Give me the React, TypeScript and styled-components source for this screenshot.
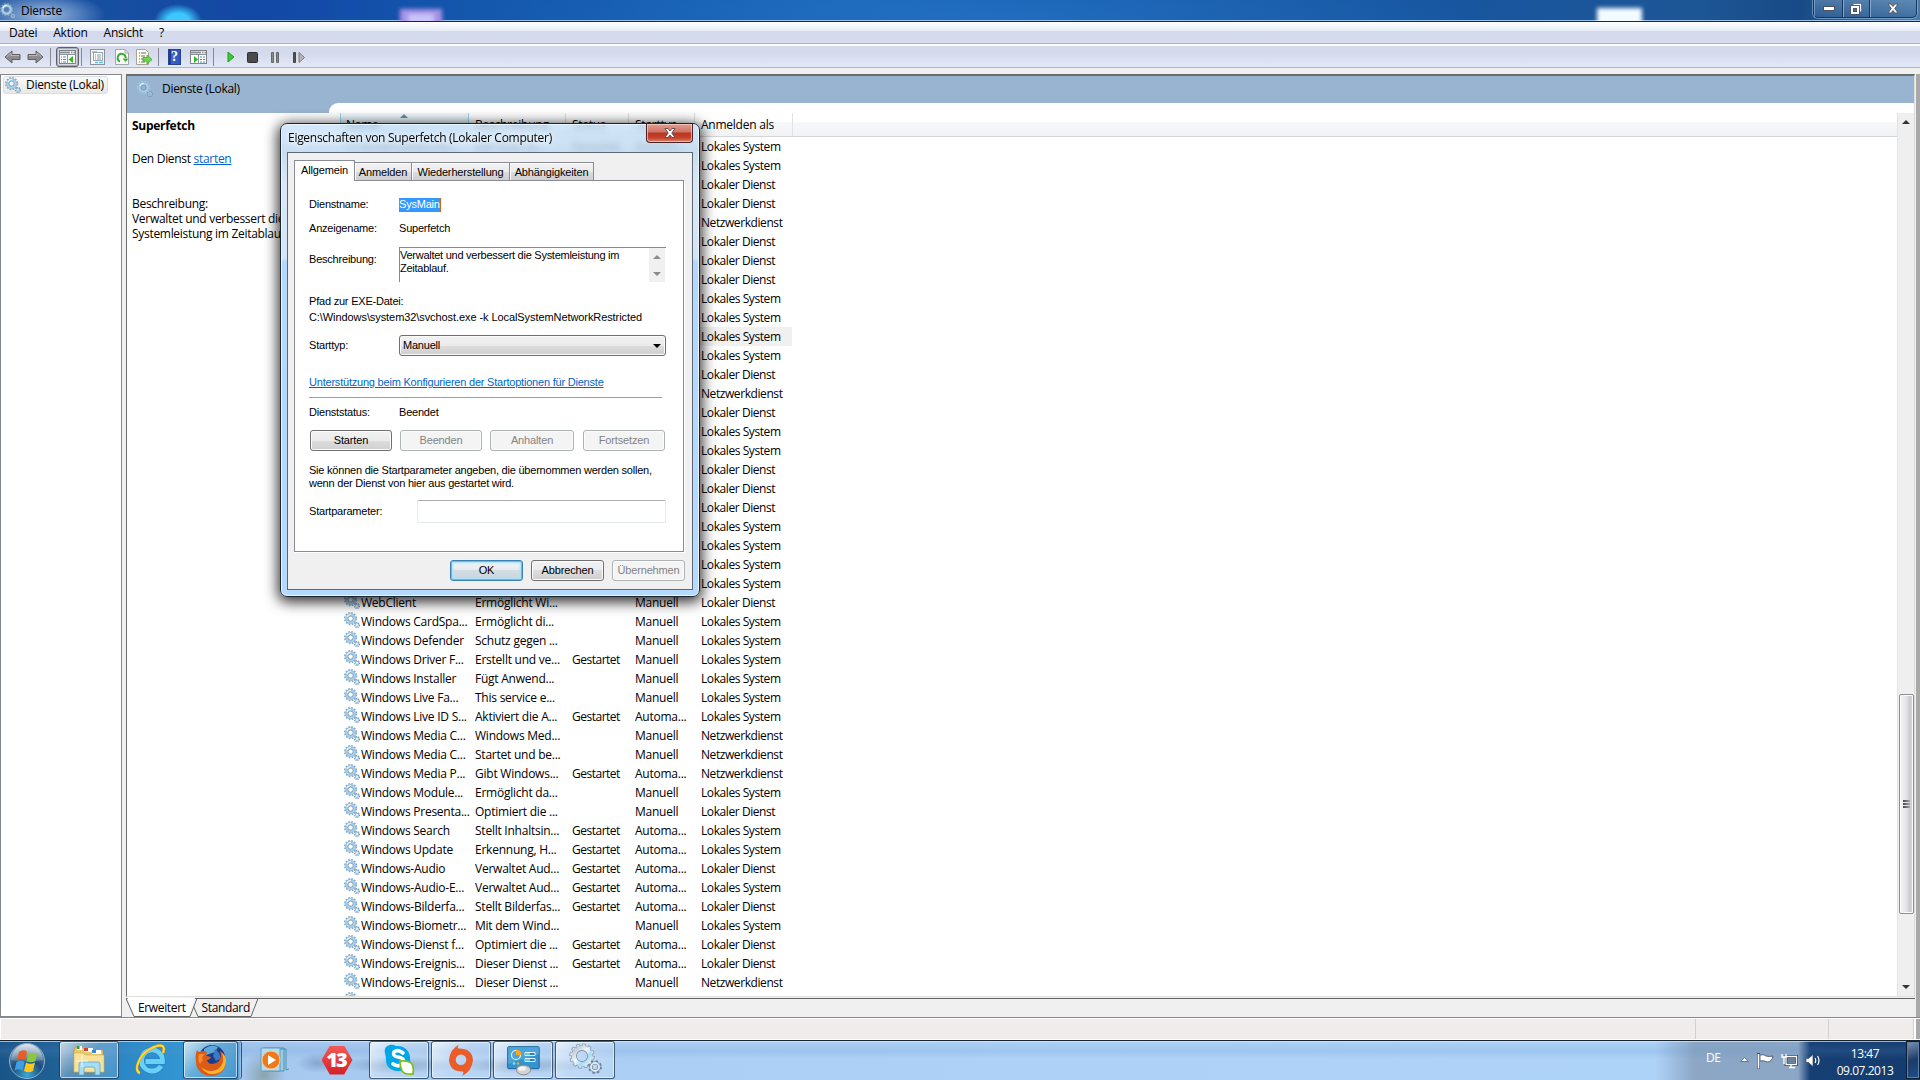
import React from 'react';
import styled, { createGlobalStyle, css } from 'styled-components';

const Global = createGlobalStyle`
  * { box-sizing: border-box; }
  html, body { margin: 0; padding: 0; overflow: hidden; }
  body { font: 12px/15px "Open Sans", "Noto Sans", sans-serif; letter-spacing: -0.24px; color: #000; }
`;

const Screen = styled.div`
  position: relative;
  width: 1920px;
  height: 1080px;
  display: flex;
  flex-direction: column;
  overflow: hidden;
  background: #f0f0f0;
`;

/* ---------- window chrome ---------- */

const TitleBar = styled.header`
  position: relative;
  overflow: hidden;
  height: 22px;
  flex: none;
  display: flex;
  justify-content: space-between;
  border-bottom: 1px solid #14284a;
  background:
    linear-gradient(#9fc0e6, #9fc0e6) 0 100% / 100% 1px no-repeat,
    radial-gradient(ellipse 62px 22px at 44px 15px, rgba(190, 215, 245, 0.8), rgba(150, 190, 235, 0) 100%),
    radial-gradient(ellipse 24px 17px at 178px 21px, #3ac8ff 45%, rgba(30, 150, 240, 0) 100%),
    radial-gradient(ellipse 500px 60px at 1000px 20px, rgba(40, 120, 205, 0.5), rgba(30, 100, 190, 0)),
    linear-gradient(90deg, #2c5da4 0, #174fa0 90px, #1248a6 260px, #1459ae 500px, #1b66b8 850px, #17559f 1450px, #1d5695 1700px, #174a86 1800px, #4a7aa8 1915px);
`;
const TitleLeft = styled.div`
  display: flex;
  align-items: center;
  gap: 5px;
  height: 21px;
  width: 1000px;
`;
const DesktopGlow = styled.i<{ $left: number; $top: number; $w: number; $c: string }>`
  position: absolute;
  left: ${p => p.$left}px;
  top: ${p => p.$top}px;
  width: ${p => p.$w}px;
  height: 20px;
  background: ${p => p.$c};
  filter: blur(2px);
`;
const Caption = styled.div`
  position: relative;
  display: flex;
  height: 18px;
  margin-right: 3px;
  border: 1px solid #16365e;
  border-top: 0;
  border-radius: 0 0 5px 5px;
  box-shadow: 0 0 0 1px rgba(160, 195, 225, 0.55);
  background: linear-gradient(rgba(110, 150, 190, 0.55), rgba(60, 105, 155, 0.5));
`;
const CaptionButton = styled.span<{ $w: number }>`
  width: ${p => p.$w}px;
  display: flex;
  align-items: center;
  justify-content: center;
  border-left: 1px solid rgba(170, 200, 230, 0.5);
  & + & { border-left: 1px solid #16365e; box-shadow: inset 1px 0 0 rgba(170, 200, 230, 0.6); }
`;
const MenuBar = styled.nav`
  height: 24px;
  flex: none;
  display: flex;
  gap: 16px;
  padding: 3px 9px 0;
  border-bottom: 2px solid #fbfbfc;
  box-shadow: inset 0 -1px 0 #b2b2b0;
  background: linear-gradient(#ffffff 0, #e6ecf6 9px, #d4d9ec 9px, #d5daed 22px);
`;
const ToolBar = styled.div`
  height: 22px;
  flex: none;
  display: flex;
  align-items: center;
  padding-top: 1px;
  border-bottom: 1px solid #adb5c8;
  background: linear-gradient(#d4d9ec 0, #d5daed 8px, #e3e9f8 100%);
`;
const Tool = styled.span<{ $w: number; $ml?: number; $active?: boolean }>`
  width: ${p => p.$w}px;
  margin-left: ${p => p.$ml ?? 0}px;
  height: 20px;
  flex: none;
  display: flex;
  align-items: center;
  justify-content: center;
  ${p => p.$active && css`
    border: 1px solid #606068;
    border-radius: 3px;
    background: #d6d9e2;
    box-shadow: inset 0 0 0 1px #a9adba;
  `}
`;
const ToolSep = styled.span<{ $ml: number }>`
  width: 1px;
  height: 18px;
  margin-left: ${p => p.$ml}px;
  background: #858995;
`;

/* ---------- workspace ---------- */

const Workspace = styled.main`
  flex: none;
  height: 950px;
  display: flex;
  padding-top: 6px;
  background: #f0f0f0;
  border-bottom: 1px solid #868a8c;
`;
const Tree = styled.aside`
  width: 122px;
  height: 943px;
  background: #fff;
  border: 1px solid #828790;
  padding: 1px 2px;
`;
const TreeItem = styled.div`
  display: flex;
  align-items: center;
  gap: 5px;
  width: 105px;
  height: 18px;
  padding: 0 0 1px 1px;
  border: 1px solid #dcdcdc;
  border-radius: 3px;
  background: linear-gradient(#fafafa, #e8e8e8);
  white-space: nowrap;
  letter-spacing: -0.3px;
`;
const Main = styled.section`
  width: 1789px;
  margin-left: 4px;
  display: flex;
  flex-direction: column;
`;
const Pane = styled.div`
  height: 923px;
  border-top: 2px solid #6c6c6c;
  border-left: 1px solid #6c6c6c;
  border-right: 1px solid #dcdcdc;
  border-bottom: 1px solid #e0e0e0;
  background: #fff;
  display: flex;
  flex-direction: column;
`;
const PaneHead = styled.div`
  height: 27px;
  flex: none;
  display: flex;
  align-items: center;
  gap: 9px;
  padding: 0 0 2px 10px;
  background: #99b4d1;
  letter-spacing: -0.3px;
`;
const PaneCurve = styled.div`
  height: 10px;
  flex: none;
  padding-left: 202px;
  background: #99b4d1;
`;
const Curve = styled.div`
  height: 10px;
  background: #fff;
  border-top-left-radius: 9px;
`;
const PaneBody = styled.div`
  flex: 1;
  min-height: 0;
  display: flex;
`;
const Info = styled.div`
  width: 213px;
  flex: none;
  padding: 5px 0 0 5px;
  overflow: hidden;
  white-space: nowrap;
  letter-spacing: -0.3px;
  h2 { margin: 0 0 18px; font-size: 12px; line-height: 15px; letter-spacing: -0.28px; }
  p { margin: 0 0 30px; }
  a { color: #0066cc; text-decoration: underline; }
`;
const List = styled.div`
  width: 1557px;
  flex: none;
  display: flex;
  flex-direction: column;
  overflow: hidden;
`;
const ListHead = styled.div`
  height: 24px;
  flex: none;
  display: grid;
  grid-template-columns: 129px 97px 63px 66px 98px 1fr;
  border-bottom: 1px solid #d5d5d5;
  margin-bottom: 0;
  background: linear-gradient(#fff 0, #fff 9px, #f7f8fa 9px, #f1f2f4);
`;
const HeadCell = styled.span<{ $sorted?: boolean }>`
  padding: 4px 0 0 6px;
  border-right: 1px solid #e0e2e4;
  ${p => p.$sorted && css`
    padding-left: 5px;
    border-left: 1px solid #96d9f9;
    border-right-color: #96d9f9;
    background: linear-gradient(#f2f9fc, #e1f1f9 50%, #d8ecf6 50%, #d0e6f2);
  `}
  &:last-child { border: 0; }
`;
const SortMark = styled.i`
  display: block;
  height: 0;
  width: 0;
  margin: -3px auto -1px 54px;
  border: 4px solid transparent;
  border-top: 0;
  border-bottom-color: #5f93ae;
`;
const Row = styled.div<{ $selected?: boolean }>`
  height: 19px;
  flex: none;
  width: 452px;
  display: grid;
  grid-template-columns: 129px 97px 63px 66px 97px;
  background: ${p => (p.$selected ? '#f0f0f0' : 'transparent')};
  white-space: nowrap;
`;
const Cell = styled.span<{ $ls?: number }>`
  padding: 2px 0 0 6px;
  letter-spacing: ${p => p.$ls ?? -0.24}px;
`;
const NameCell = styled.span`
  display: flex;
  gap: 1px;
  padding: 0 0 0 4px;
  & > span { padding-top: 2px; letter-spacing: -0.24px; }
`;
const ScrollTrack = styled.div`
  width: 17px;
  background: #efefef;
  border-left: 1px solid #e4e4e4;
  display: flex;
  flex-direction: column;
  align-items: center;
`;
const Arrow = styled.i<{ $down?: boolean; $mt: number; $c?: string }>`
  width: 0;
  height: 0;
  margin-top: ${p => p.$mt}px;
  border: 4px solid transparent;
  ${p => (p.$down ? 'border-bottom: 0; border-top-color:' : 'border-top: 0; border-bottom-color:')} ${p => p.$c ?? '#333'};
`;
const Thumb = styled.div`
  width: 15px;
  height: 220px;
  margin-top: 570px;
  border: 1px solid #8f8f93;
  border-radius: 2px;
  box-shadow: inset 0 0 0 1px #fafafa;
  background: linear-gradient(90deg, #f5f5f5, #e6e6e8 45%, #c9cbd1 75%, #d9d9dd);
  display: flex;
  flex-direction: column;
  gap: 1px;
  align-items: center;
  justify-content: center;
`;
const Grip = styled.i`
  width: 7px;
  height: 2px;
  background: linear-gradient(90deg, #444, #aaa);
`;
const TabStrip = styled.div`
  height: 20px;
  border-top: 1px solid #646464;
  margin-top: 1px;
  display: flex;
  position: relative;
`;
const TabLabel = styled.span<{ $ml: number }>`
  position: relative;
  margin-left: ${p => p.$ml}px;
  padding-top: 1px;
  letter-spacing: -0.36px;
`;
const TabShape = styled.svg`
  position: absolute;
  left: 0;
  top: -2px;
`;
const RightEdge = styled.div`
  width: 4px;
  margin-left: 1px;
  background: #a9a9a9;
`;
const StatusBar = styled.footer`
  height: 22px;
  flex: none;
  display: flex;
  justify-content: flex-end;
  border-top: 1px solid #fff;
  border-bottom: 1px solid #fff;
  border-left: 1px solid #fff;
  background: #f0eceb;
`;
const StatusCell = styled.span<{ $w: number }>`
  width: ${p => p.$w}px;
  border-left: 1px solid #d3d0cf;
`;
const StatusEnd = styled.span`
  width: 6px;
  background: #a9a9a9;
  border-left: 2px solid #fff;
`;

/* ---------- taskbar ---------- */

const TaskBar = styled.footer`
  flex: 1;
  display: flex;
  align-items: stretch;
  border-top: 1px solid #16222e;
  box-shadow: inset 0 1px 0 rgba(215, 235, 250, 0.7);
  background:
    radial-gradient(ellipse 22px 24px at 264px 34px, rgba(120, 140, 130, 0.6), transparent),
    radial-gradient(ellipse 22px 10px at 318px 22px, rgba(70, 100, 140, 0.35), transparent),
    radial-gradient(ellipse 60px 9px at 400px 24px, rgba(70, 100, 140, 0.45), transparent),
    radial-gradient(ellipse 70px 9px at 520px 24px, rgba(70, 100, 140, 0.45), transparent),
    linear-gradient(rgba(90, 140, 200, 0) 0, rgba(90, 140, 200, 0.18) 10px, rgba(90, 140, 200, 0) 18px),
    linear-gradient(90deg, #1a5587 0, #1f6196 58px, #2a84c2 110px, #3296d2 180px, #2d89c8 237px, #a6c8ef 241px, #aacdf4 500px, #aed2f7 1000px, #aed3f8 1655px, #8ca6c4 1695px, #8ba7c5 1798px, #163f74 1810px, #143c6e 1905px);
`;
const Orb = styled.div`
  width: 59px;
  display: flex;
  align-items: center;
  justify-content: center;
  padding-right: 5px;
`;
const Task = styled.div<{ $w: number; $ml?: number; $open?: boolean }>`
  width: ${p => p.$w}px;
  margin-left: ${p => p.$ml ?? 0}px;
  flex: none;
  height: 38px;
  display: flex;
  align-items: center;
  justify-content: center;
  ${p => p.$open && css`
    border: 1px solid rgba(20, 45, 75, 0.75);
    border-radius: 3px;
    box-shadow: inset 0 0 0 1px rgba(240, 250, 255, 0.65);
    background: linear-gradient(135deg, rgba(255, 255, 255, 0.75), rgba(255, 255, 255, 0.25) 45%, rgba(255, 255, 255, 0.12));
  `}
`;
const TaskEdge = styled.i`
  width: 4px;
  height: 38px;
  border-right: 1px solid rgba(20, 45, 75, 0.75);
  border-radius: 0 3px 3px 0;
`;
const Tray = styled.div`
  margin-left: auto;
  display: flex;
  color: #fff;
`;
const Lang = styled.span`
  width: 34px;
  padding-top: 9px;
  letter-spacing: -0.4px;
`;
const TrayIcon = styled.span<{ $w: number; $pt?: number }>`
  width: ${p => p.$w}px;
  padding-top: ${p => p.$pt ?? 12}px;
`;
const Clock = styled.time`
  width: 81px;
  padding: 4px 1px 0 0;
  text-align: center;
  line-height: 17px;
  letter-spacing: -0.45px;
`;
const ShowDesktop = styled.i`
  width: 14px;
  height: 38px;
  border: 1px solid #0b1c35;
  box-shadow: inset 0 0 0 1px #5f7fa6;
  background: linear-gradient(160deg, #7d93b2, #1d3b66 50%, #1c4f8c);
`;

/* ---------- properties dialog ---------- */

const Dialog = styled.div`
  position: absolute;
  left: 280px;
  top: 123px;
  width: 420px;
  height: 474px;
  border: 1px solid #1c2530;
  border-radius: 7px;
  box-shadow: inset 0 0 0 1px #eaf5ff, 0 3px 14px 2px rgba(0, 0, 0, 0.82);
  background: linear-gradient(rgba(200, 226, 250, 0.78) 0, rgba(190, 215, 238, 0.84) 28px, #d9e8f6 60px, #d3e5f7 134px, #b4d7fd 138px, #b6d9ff 100%);
  backdrop-filter: blur(3px);
  padding: 0 7px 6px 6px;
  display: flex;
  flex-direction: column;
  font: 11px/13px "Liberation Sans", Arial, sans-serif;
  letter-spacing: -0.21px;
`;
const DialogTitle = styled.div`
  height: 28px;
  flex: none;
  display: flex;
  justify-content: space-between;
  font: 12px/15px "Open Sans", sans-serif;
  letter-spacing: -0.28px;
  white-space: nowrap;
  & > span { padding: 6px 0 0 1px; text-shadow: 0 0 6px #fff, 0 0 8px #fff; }
`;
const CloseButton = styled.i`
  width: 47px;
  height: 19px;
  margin-right: -1px;
  border: 1px solid #47242a;
  border-top: 0;
  border-radius: 0 0 4px 4px;
  box-shadow: inset 0 0 0 1px rgba(255, 215, 205, 0.65);
  background: linear-gradient(#dfa095 0, #cf7465 8px, #bb3420 9px, #c4442c 14px, #de8a70 100%);
  display: flex;
  align-items: center;
  justify-content: center;
`;
const Client = styled.div`
  flex: 1;
  border: 1px solid #5c6876;
  margin-right: -1px;
  background: #f0f0f0;
  padding: 7px 6px;
  display: flex;
  flex-direction: column;
`;
const Tabs = styled.div`
  display: flex;
  align-items: flex-end;
  height: 20px;
`;
const Tab = styled.span<{ $w: number; $active?: boolean }>`
  width: ${p => p.$w}px;
  height: 18px;
  padding-top: 3px;
  border: 1px solid #898c95;
  border-bottom: 0;
  text-align: center;
  white-space: nowrap;
  background: linear-gradient(#f2f2f2, #ebebeb 50%, #dddddd 50%, #cfcfcf);
  letter-spacing: -0.15px;
  & + & { border-left: 0; box-shadow: inset 1px 1px 0 #fafafa; }
  ${p => p.$active && css`
    position: relative;
    margin-bottom: -1px;
    height: 21px;
    background: #fff;
  `}
`;
const Page = styled.div`
  height: 372px;
  width: 390px;
  border: 1px solid #898c95;
  background: #fff;
  box-shadow: 1px 1px 0 #fff;
  padding: 17px 0 0 14px;
`;
const Field = styled.div<{ $h: number; $pt?: number; $ls?: number }>`
  height: ${p => p.$h}px;
  display: flex;
  white-space: nowrap;
  letter-spacing: ${p => p.$ls ?? -0.21}px;
  & > label { width: 90px; padding-top: ${p => p.$pt ?? 0}px; }
`;
const Selected = styled.span`
  height: 14px;
  background: #3399ff;
  color: #fff;
  border-right: 1px solid #c86a1c;
`;
const DescBox = styled.div`
  width: 267px;
  height: 35px;
  margin-top: -1px;
  display: flex;
  justify-content: space-between;
  border-top: 1px solid #8a8a8a;
  border-left: 1px solid #8a8a8a;
  & > p { margin: 1px 0 0; letter-spacing: -0.26px; }
`;
const MiniScroll = styled.span`
  width: 16px;
  margin-right: 1px;
  background: #f0f0f0;
  display: flex;
  flex-direction: column;
  align-items: center;
`;
const Select = styled.div`
  width: 267px;
  height: 21px;
  margin-top: -1px;
  display: flex;
  justify-content: space-between;
  padding: 3px 4px 0 3px;
  border: 1px solid #707070;
  border-radius: 3px;
  box-shadow: inset 0 0 0 1px #fafafa;
  background: linear-gradient(#f2f2f2, #ebebeb 50%, #dddddd 50%, #cfcfcf);
`;
const HelpLink = styled.a`
  display: block;
  margin-top: -1px;
  color: #0066cc;
  text-decoration: underline;
  white-space: nowrap;
`;
const Rule = styled.hr`
  width: 353px;
  height: 1px;
  border: 0;
  margin: 8px 0 8px;
  background: #a0a0a0;
`;
const Buttons = styled.div<{ $ml: number }>`
  display: flex;
  margin-left: ${p => p.$ml}px;
  gap: 8px;
`;
const Button = styled.button<{ $w: number; $ok?: boolean; $ml?: number }>`
  width: ${p => p.$w}px;
  height: 21px;
  margin-left: ${p => p.$ml ?? 0}px;
  padding: 0;
  flex: none;
  font: inherit;
  letter-spacing: -0.15px;
  color: #000;
  border: 1px solid #707070;
  border-radius: 3px;
  box-shadow: inset 0 0 0 1px #fcfcfc;
  background: linear-gradient(#f2f2f2, #ebebeb 50%, #dddddd 50%, #cfcfcf);
  &:disabled { color: #838383; border-color: #adb2b5; background: #f4f4f4; }
  ${p => p.$ok && css`
    border-color: #3c7fb1;
    box-shadow: inset 0 0 0 1px #48cbf2, inset 0 0 2px 2px #a8e4f8;
    background: linear-gradient(#f0f4f6, #e4ebef 50%, #d2dde4 50%, #c9d6de);
  `}
`;
const FooterButton = styled(Button)`
  margin-top: 8px;
`;
const Hint = styled.p`
  margin: 13px 0 11px;
  white-space: nowrap;
  letter-spacing: -0.22px;
`;
const TextInput = styled.input`
  width: 249px;
  height: 23px;
  margin: -1px 0 0 18px;
  border: 1px solid #e3e9ef;
  border-top-color: #abadb3;
  border-radius: 2px;
  background: #fff;
`;

/* ---------- drawings ---------- */

const Gear = ({ pale = false }: { pale?: boolean }) => (
  <svg width="16" height="16" viewBox="0 0 16 16" fill="none" style={{ flex: 'none' }}>
    <circle cx="6.6" cy="6.6" r="5.7" stroke={pale ? '#a9c9e2' : '#7fa9c8'} strokeWidth="1.8" strokeDasharray="1.6 1.38" />
    <circle cx="6.6" cy="6.6" r="4" stroke="#a9cfea" strokeWidth="2.600" />
    <circle cx="6.600" cy="6.600" r="5.100" stroke="#88b2d0" strokeWidth=".5" />
    <circle cx="6.6" cy="6.6" r="2.6" stroke="#6f8ea8" strokeWidth=".8" />
    <path d="M3 5a4 4 0 0 1 4-2.500" stroke="#eaf7ff" strokeWidth="1.200" />
    <circle cx="13" cy="13" r="2.300" stroke="#6f93b0" strokeWidth="1.500" strokeDasharray="1 .8" />
    <circle cx="13" cy="13" r="1.500" stroke="#9fc2dc" strokeWidth="1.100" />
  </svg>
);

const BigGear = () => (
  <svg width="34" height="34" viewBox="0 0 34 34" fill="none">
    <defs>
      <linearGradient id="metal" x1="0" y1="0" x2="1" y2="1">
        <stop offset="0" stopColor="#b4c0d2" /><stop offset=".45" stopColor="#f2f8fc" />
        <stop offset=".7" stopColor="#a5dcf4" /><stop offset="1" stopColor="#e8eff5" />
      </linearGradient>
    </defs>
    <circle cx="14" cy="13" r="11" stroke="#6e8096" strokeWidth="3.200" strokeDasharray="3.200 2.560" />
    <circle cx="14" cy="13" r="8" stroke="#6e8096" strokeWidth="5.600" />
    <circle cx="14" cy="13" r="10.800" stroke="#dbe6f0" strokeWidth="2.400" strokeDasharray="2.400 3.256" strokeDashoffset="-.4" />
    <circle cx="14" cy="13" r="8.200" stroke="url(#metal)" strokeWidth="4.600" />
    <circle cx="27" cy="24" r="5.800" stroke="#6e8096" strokeWidth="2.200" strokeDasharray="2.300 2.250" />
    <circle cx="27" cy="24" r="4" stroke="#6e8096" strokeWidth="3.200" />
    <circle cx="27" cy="24" r="4" stroke="#dfe9f1" strokeWidth="2" />
  </svg>
);

const BackArrow = ({ flip = false }: { flip?: boolean }) => (
  <svg width="17" height="14" viewBox="0 0 17 14" transform={flip ? 'scale(-1 1)' : undefined}>
    <path d="M1 7 8 1v3.500h8v5H8V13z" fill="#8d8d90" stroke="#5f5f63" strokeWidth="1" />
    <path d="M2.500 7 7 3v2.500h8" fill="none" stroke="#b9b9bc" />
  </svg>
);
const PanelIcon = ({ right = false }: { right?: boolean }) => (
  <svg width="17" height="14" viewBox="0 0 17 14">
    <rect x=".5" y=".5" width="16" height="13" fill="#fff" stroke="#7d8389" />
    <path d="M1 2.500h15" stroke="#8a9098" strokeWidth="2" strokeDasharray="10 1 1.500 1 1.500 1" />
    <path d="M1 4.500h15M8.500 5v9" stroke="#8d939a" />
    {right ? <path d="m4 6 4 3.500-4 3.500z" fill="#35b52a" /> : <path d="m14 6-4.500 3.500L14 13z" fill="#35b52a" />}
    <path d={right ? 'M10 7h2m1 0h2M10 9.500h2m1 0h2M10 12h2m1 0h2' : 'M2 7h1m1 0h3M2 9.500h1m1 0h3M2 12h1m1 0h3'} stroke="#4a86c5" />
  </svg>
);
const PropsIcon = () => (
  <svg width="15" height="16" viewBox="0 0 15 16">
    <rect x=".5" y=".5" width="14" height="15" fill="#f4f5f6" stroke="#8c9196" />
    <rect x="3.500" y="3.500" width="9" height="8" fill="#fff" stroke="#9fa7ae" />
    <path d="M2 3h5M5 6h1m1 0h4M5 8h1m1 0h4M5 10h1m1 0h4" stroke="#8497a8" />
    <path d="M5 13.500h3m1 0h4" stroke="#55c3e2" strokeWidth="1.500" />
  </svg>
);
const RefreshIcon = () => (
  <svg width="14" height="16" viewBox="0 0 14 16">
    <path d="M.5.5h9.500l3.500 3.500v11.500H.5z" fill="#fcfcfc" stroke="#a3a6aa" /><path d="M10 .5V4h3.500" fill="none" stroke="#a3a6aa" />
    <path d="M5 12.500A4 4 0 1 1 10.700 9" fill="none" stroke="#3cad32" strokeWidth="2" />
    <path d="M7.500 9.500h6L10.500 13z" fill="#3cad32" />
  </svg>
);
const ExportIcon = () => (
  <svg width="16" height="16" viewBox="0 0 16 16">
    <path d="M.5.5h9l3 3v12H.5z" fill="#fffdf2" stroke="#a9a591" />
    <path d="M3 4h1m1 0h5M3 7h1m1 0h4M3 10h1m1 0h4M3 13h1m1 0h4" stroke="#6c6a60" />
    <path d="M7 8.500h4V6l5 4.500-5 4.500v-2.800H7z" fill="#72d84a" stroke="#3fa52a" strokeWidth=".8" />
  </svg>
);
const HelpMark = styled.b`
  width: 13px;
  height: 16px;
  background: linear-gradient(90deg, #1e3a94 2px, #3e66cf 2px, #2f55bd);
  border: 1px solid #27428f;
  color: #fff;
  font: bold 14px/14px "Liberation Serif", serif;
  letter-spacing: 0;
  text-align: center;
`;

const StartOrb = () => (
  <svg width="38" height="38" viewBox="0 0 38 38">
    <defs>
      <radialGradient id="orb" cx=".5" cy=".9" r=".9"><stop offset="0" stopColor="#3ba6d8" /><stop offset=".5" stopColor="#1a4d7c" /><stop offset="1" stopColor="#7f9ab0" /></radialGradient>
      <linearGradient id="gloss" x1="0" y1="0" x2="0" y2="1"><stop offset="0" stopColor="#fff" stopOpacity=".75" /><stop offset="1" stopColor="#fff" stopOpacity=".15" /></linearGradient>
    </defs>
    <circle cx="19" cy="19" r="17.500" fill="url(#orb)" stroke="#8db4cc" />
    <path d="M3 18a16 16 0 0 1 32 0q-16 4-32 0z" fill="url(#gloss)" />
    <path d="M11 10q4-3 8-.5l-2 8.500q-4-2.500-8 0z" fill="#ee5a24" />
    <path d="M20.500 10.500q4 2.500 9 0l-2 8.500q-4.500 2.500-9 0z" fill="#8cc63f" />
    <path d="M8.500 20q4-2.500 8 0L14.500 28.500q-4-2.500-8 0z" fill="#3f9fe0" />
    <path d="M18 20.500q4.500 2.500 9 0l-2 8.500q-4.500 2.500-9 0z" fill="#fcc61e" />
  </svg>
);
const ExplorerIcon = () => (
  <svg width="34" height="32" viewBox="0 0 34 32">
    <path d="M2 28V6l1.500-3h8L13 6h18v22z" fill="#e9c96c" stroke="#b8923c" strokeWidth=".7" />
    <path d="M5 2h5v4H5z" fill="#fff" /><path d="M5 2h2.500v3H5z" fill="#2c9c35" />
    <path d="M12 4h9v4h-9z" fill="#fff" /><path d="M12 4h4v3h-4z" fill="#d33d2b" />
    <path d="M20 6h9v4h-9z" fill="#fff" /><path d="M20 6h4v3h-4z" fill="#3a87d6" />
    <path d="M2 28V9h9l2 2h19v17z" fill="#f6e29a" stroke="#d2ae58" strokeWidth=".6" />
    <path d="M7 31V20q0-2 2-2h17q2 0 2 2v11h-5v-6q0-2-2-2h-7q-2 0-2 2v6z" fill="#a8dcf5" stroke="#5ba6cf" strokeWidth=".8" />
    <path d="M10 11v12M4 17h12" stroke="#fff" strokeWidth=".8" />
  </svg>
);
const IeIcon = () => (
  <svg width="32" height="32" viewBox="0 0 32 32" fill="none">
    <path d="M26 22a10.500 10.500 0 1 1 1.500-4.500H10.500" stroke="#2387c9" strokeWidth="6.500" />
    <path d="M26 22a10.500 10.500 0 1 1 1.500-4.500H10.500" stroke="#6bd0f5" strokeWidth="4.800" />
    <path d="M5 29C-2 27 4 11 15 5s16-4 13 4" stroke="#d89a10" strokeWidth="2.800" />
    <path d="M5 29C-2 27 4 11 15 5s16-4 13 4" stroke="#fbdc3e" strokeWidth="1.900" />
  </svg>
);
const FirefoxIcon = () => (
  <svg width="32" height="32" viewBox="0 0 32 32">
    <circle cx="17" cy="14" r="13" fill="#1c3c86" />
    <path d="M9 5q7-6 14-2l-3 5-6 2-5 2z" fill="#5fa8dc" />
    <path d="M20 5q6 4 5 10l-4 2-3-5z" fill="#3b79c2" />
    <path d="M2 6q1 2 3 2 3-2 7 0-2 3 0 4l4 1q-1 3-4 3 1 4 5 4t7-3q3-5 1-10 6 3 6 11a15 14 0 0 1-30 0Q0 11 2 6z" fill="#dd5a18" />
    <path d="M27 9q4 12-6 17-8 3-15-3 5 8 13 7 11-1 12-13 0-5-4-8z" fill="#f7b52b" />
    <path d="M4 10q-2 6 1 10l3-4q-2-3 2-6z" fill="#f08a2a" />
  </svg>
);
const MediaIcon = () => (
  <svg width="30" height="28" viewBox="0 0 30 28">
    <path d="M6 3h20v21l3-1M4 2h20v23H4z" fill="#9ccbe3" stroke="#4d92b5" strokeWidth="1" />
    <path d="M1 2h19v23H1z" fill="#b9dcec" stroke="#5c9fc0" />
    <circle cx="11" cy="14" r="9" fill="#f07a1a" stroke="#f6c79a" /><path d="m8 9 8 5-8 5z" fill="#fff" />
  </svg>
);
const StopMark = styled.div`
  width: 31px;
  height: 29px;
  clip-path: polygon(27% 0, 73% 0, 100% 50%, 73% 100%, 27% 100%, 0 50%);
  background: linear-gradient(#f25a55, #d61f26);
  color: #fff;
  font: 800 20px/28px "Open Sans", sans-serif;
  letter-spacing: -2px;
  text-indent: -2px;
  text-align: center;
`;
const SkypeIcon = () => (
  <svg width="32" height="32" viewBox="0 0 32 32">
    <path d="M2 9C0 2 8-1 13 2c9-1 15 6 14 14 2 6-2 12-9 11C8 28 2 22 3 14z" fill="#00a6e8" />
    <path d="M20 9q-5-4-9-1-2 4 4 5 7 1 5 6-4 5-10 1" fill="none" stroke="#fff" strokeWidth="3.600" strokeLinecap="round" />
    <path d="M17 17q9-1 12 3 2 4 1 10-8 1-11-3-2-4-2-10z" fill="#fff" stroke="#7cc11f" strokeWidth="1.800" />
  </svg>
);
const OriginIcon = () => (
  <svg width="26" height="34" viewBox="0 0 26 34">
    <path fillRule="evenodd" d="M12 1q-3 2-2 4.500Q24 5 25 17q-1 11-11 16 2-3 1-4.500Q2 29 1 17 2 6 12 1zm1 10.500a5.300 5.300 0 1 0 0 10.600 5.300 5.300 0 0 0 0-10.600z" fill="#ea5c28" />
  </svg>
);
const ControlIcon = () => (
  <svg width="33" height="32" viewBox="0 0 33 32">
    <rect x=".7" y="2.700" width="31.500" height="22" rx="1" fill="#3494cf" stroke="#1d6499" />
    <path d="M1 3h31v7L1 20z" fill="#66b5e0" opacity=".5" />
    <circle cx="9" cy="11" r="4.500" fill="none" stroke="#e5f4fd" strokeWidth="1.200" /><path d="M9 11V5.500a5.500 5.500 0 0 1 5.500 5.500z" fill="#f7a823" />
    <path d="M18 8.500h10v3H18zM18 14.500h10v3H18z" fill="#2a7fc4" stroke="#e5f4fd" /><path d="M19 9h4v2h-4zM19 15h4v2h-4z" fill="#55d2f2" />
    <circle cx="7" cy="19.500" r="1.300" fill="#8be0f8" /><circle cx="11" cy="19.500" r="1.300" fill="#f7a823" />
    <ellipse cx="16.500" cy="26" rx="7" ry="4.800" fill="#d4d4d4" stroke="#8b8b8b" /><ellipse cx="15" cy="24.500" rx="4" ry="2" fill="#f5f5f5" />
  </svg>
);

/* ---------- data ---------- */

type Service = [name: string, desc: string, state: string, start: string, account: 'S' | 'D' | 'N'];
const accounts = { S: 'Lokales System', D: 'Lokaler Dienst', N: 'Netzwerkdienst' };
const coveredAccounts = 'SSDDNDDDSSSSDNDSSDDDSSSS'.split('') as Service[4][];
const G = 'Gestartet';
const M = 'Manuell';
const A = 'Automa...';
const services: Service[] = [
  ...coveredAccounts.map((a, i): Service => (i === 0 ? ['Sicherheitskonto...', 'Der Start di...', G, A, a] : ['', '', '', '', a])),
  ['WebClient', 'Ermöglicht Wi...', '', M, 'D'],
  ['Windows CardSpa...', 'Ermöglicht di...', '', M, 'S'],
  ['Windows Defender', 'Schutz gegen ...', '', M, 'S'],
  ['Windows Driver F...', 'Erstellt und ve...', G, M, 'S'],
  ['Windows Installer', 'Fügt Anwend...', '', M, 'S'],
  ['Windows Live Fa...', 'This service e...', '', M, 'S'],
  ['Windows Live ID S...', 'Aktiviert die A...', G, A, 'S'],
  ['Windows Media C...', 'Windows Med...', '', M, 'N'],
  ['Windows Media C...', 'Startet und be...', '', M, 'N'],
  ['Windows Media P...', 'Gibt Windows...', G, A, 'N'],
  ['Windows Module...', 'Ermöglicht da...', '', M, 'S'],
  ['Windows Presenta...', 'Optimiert die ...', '', M, 'D'],
  ['Windows Search', 'Stellt Inhaltsin...', G, A, 'S'],
  ['Windows Update', 'Erkennung, H...', G, A, 'S'],
  ['Windows-Audio', 'Verwaltet Aud...', G, A, 'D'],
  ['Windows-Audio-E...', 'Verwaltet Aud...', G, A, 'S'],
  ['Windows-Bilderfa...', 'Stellt Bilderfas...', G, A, 'D'],
  ['Windows-Biometr...', 'Mit dem Wind...', '', M, 'S'],
  ['Windows-Dienst f...', 'Optimiert die ...', G, A, 'D'],
  ['Windows-Ereignis...', 'Dieser Dienst ...', G, A, 'D'],
  ['Windows-Ereignis...', 'Dieser Dienst ...', '', M, 'N'],
];

const PropertiesDialog = () => (
  <Dialog>
    <DialogTitle>
      <span>Eigenschaften von Superfetch (Lokaler Computer)</span>
      <CloseButton>
        <svg width="12" height="10" viewBox="0 0 12 10"><path d="M1 .5h3L6 3 8 .5h3L7.800 5 11 9.500H8L6 7 4 9.500H1L4.200 5z" fill="#fff" stroke="#5a4548" strokeWidth=".9" /></svg>
      </CloseButton>
    </DialogTitle>
    <Client>
      <Tabs>
        <Tab $w={61} $active>Allgemein</Tab>
        <Tab $w={57}>Anmelden</Tab>
        <Tab $w={98}>Wiederherstellung</Tab>
        <Tab $w={84}>Abhängigkeiten</Tab>
      </Tabs>
      <Page>
        <Field $h={24}><label>Dienstname:</label><Selected>SysMain</Selected></Field>
        <Field $h={26}><label>Anzeigename:</label>Superfetch</Field>
        <Field $h={47} $pt={5}>
          <label>Beschreibung:</label>
          <DescBox>
            <p>Verwaltet und verbessert die Systemleistung im<br />Zeitablauf.</p>
            <MiniScroll><Arrow $mt={7} $c="#8b8b8b" /><Arrow $mt={13} $c="#8b8b8b" $down /></MiniScroll>
          </DescBox>
        </Field>
        <Field $h={16}>Pfad zur EXE-Datei:</Field>
        <Field $h={25} $ls={-0.08}>C:\Windows\system32\svchost.exe -k LocalSystemNetworkRestricted</Field>
        <Field $h={41} $pt={3}>
          <label>Starttyp:</label>
          <Select>Manuell<Arrow $down $mt={5} $c="#000" /></Select>
        </Field>
        <HelpLink>Unterstützung beim Konfigurieren der Startoptionen für Dienste</HelpLink>
        <Rule />
        <Field $h={24}><label>Dienststatus:</label>Beendet</Field>
        <Buttons $ml={1}>
          <Button $w={82}>Starten</Button>
          <Button $w={82} disabled>Beenden</Button>
          <Button $w={84} disabled>Anhalten</Button>
          <Button $w={82} $ml={1} disabled>Fortsetzen</Button>
        </Buttons>
        <Hint>Sie können die Startparameter angeben, die übernommen werden sollen,<br />wenn der Dienst von hier aus gestartet wird.</Hint>
        <Field $h={24} $pt={4}><label>Startparameter:</label><TextInput /></Field>
      </Page>
      <Buttons $ml={156}>
        <FooterButton $w={73} $ok>OK</FooterButton>
        <FooterButton $w={73}>Abbrechen</FooterButton>
        <FooterButton $w={73} disabled>Übernehmen</FooterButton>
      </Buttons>
    </Client>
  </Dialog>
);

export default function App() {
  return (
    <>
      <Global />
      <Screen>
        <TitleBar>
          <TitleLeft><Gear />Dienste</TitleLeft>
          <DesktopGlow $left={400} $top={9} $w={42} $c="#a893e6" />
          <DesktopGlow $left={408} $top={14} $w={26} $c="#c9c4fa" />
          <DesktopGlow $left={1597} $top={8} $w={45} $c="#f2fbff" />
          <Caption>
            <CaptionButton $w={28}><svg width="12" height="5"><rect x=".5" y=".5" width="11" height="4" fill="#fff" stroke="#4b5160" /></svg></CaptionButton>
            <CaptionButton $w={27}>
              <svg width="12" height="12" fill="none"><path d="M3.500 1.500h7v7" stroke="#4b5160" strokeWidth="3" /><path d="M3.500 1.500h7v7" stroke="#fff" strokeWidth="1.500" /><rect x="2" y="4" width="6" height="6" stroke="#4b5160" strokeWidth="3.500" /><rect x="2" y="4" width="6" height="6" stroke="#fff" strokeWidth="2" /></svg>
            </CaptionButton>
            <CaptionButton $w={47}>
              <svg width="12" height="11" viewBox="0 0 12 10"><path d="M1 .5h3L6 3 8 .5h3L7.800 5 11 9.500H8L6 7 4 9.500H1L4.200 5z" fill="#fff" stroke="#4b5160" strokeWidth=".9" /></svg>
            </CaptionButton>
          </Caption>
        </TitleBar>
        <MenuBar><span>Datei</span><span>Aktion</span><span>Ansicht</span><span>?</span></MenuBar>
        <ToolBar>
          <Tool $w={17} $ml={4}><BackArrow /></Tool>
          <Tool $w={17} $ml={6}><BackArrow flip /></Tool>
          <ToolSep $ml={6} />
          <Tool $w={23} $ml={5} $active><PanelIcon /></Tool>
          <ToolSep $ml={2} />
          <Tool $w={15} $ml={8}><PropsIcon /></Tool>
          <Tool $w={14} $ml={10}><RefreshIcon /></Tool>
          <Tool $w={16} $ml={7}><ExportIcon /></Tool>
          <ToolSep $ml={6} />
          <Tool $w={13} $ml={9}><HelpMark>?</HelpMark></Tool>
          <Tool $w={17} $ml={9}><PanelIcon right /></Tool>
          <ToolSep $ml={6} />
          <Tool $w={8} $ml={13}><svg width="8" height="12"><path d="M1 1v10l6-5z" fill="#3ccb30" stroke="#1f9a24" /></svg></Tool>
          <Tool $w={11} $ml={12}><svg width="11" height="11"><rect x=".5" y=".5" width="10" height="10" rx="1" fill="#4a4a4c" stroke="#2e2e30" /></svg></Tool>
          <Tool $w={9} $ml={13}><svg width="9" height="11"><path d="M.5.5h2v10h-2zM5.500.5h2v10h-2z" fill="#8a8a8c" stroke="#68686c" /></svg></Tool>
          <Tool $w={13} $ml={13}><svg width="13" height="11"><path d="M.5.5h2v10h-2z" fill="#555" stroke="#444" /><path d="M6 .5v10l5.500-5z" fill="#b5b5b8" stroke="#7d7d80" /></svg></Tool>
        </ToolBar>
        <Workspace>
          <Tree><TreeItem><Gear />Dienste (Lokal)</TreeItem></Tree>
          <Main>
            <Pane>
              <PaneHead><Gear pale />Dienste (Lokal)</PaneHead>
              <PaneCurve><Curve /></PaneCurve>
              <PaneBody>
                <Info>
                  <h2>Superfetch</h2>
                  <p>Den Dienst <a>starten</a></p>
                  Beschreibung:<br />Verwaltet und verbessert die<br />Systemleistung im Zeitablauf.
                </Info>
                <List>
                  <ListHead>
                    <HeadCell $sorted><SortMark />Name</HeadCell>
                    <HeadCell>Beschreibung</HeadCell>
                    <HeadCell>Status</HeadCell>
                    <HeadCell>Starttyp</HeadCell>
                    <HeadCell>Anmelden als</HeadCell>
                    <HeadCell />
                  </ListHead>
                  {services.map(([name, desc, state, start, account], i) => (
                    <Row key={i} $selected={i === 10}>
                      <NameCell>{name && <Gear />}<span>{name}</span></NameCell>
                      <Cell>{desc}</Cell>
                      <Cell $ls={-0.5}>{state}</Cell>
                      <Cell>{start}</Cell>
                      <Cell $ls={-0.42}>{accounts[account]}</Cell>
                    </Row>
                  ))}
                  <Row><NameCell><Gear /></NameCell></Row>
                </List>
                <ScrollTrack>
                  <Arrow $mt={7} />
                  <Thumb><Grip /><Grip /><Grip /></Thumb>
                  <Arrow $down $mt={71} />
                </ScrollTrack>
              </PaneBody>
            </Pane>
            <TabStrip>
              <TabShape width="140" height="22" fill="none">
                <path d="M1 0 8.500 19H63L69 1z" fill="#fff" />
                <path d="M0 1.500 8 19.500H64L71 1.500M67.500 9.500 72 19.500H125L132 1.500" stroke="#646464" />
              </TabShape>
              <TabLabel $ml={12}>Erweitert</TabLabel>
              <TabLabel $ml={16}>Standard</TabLabel>
            </TabStrip>
          </Main>
          <RightEdge />
        </Workspace>
        <StatusBar>
          <StatusCell $w={133} /><StatusCell $w={85} /><StatusCell $w={1} /><StatusEnd />
        </StatusBar>
        <TaskBar>
          <Orb><StartOrb /></Orb>
          <Task $w={60} $open><ExplorerIcon /></Task>
          <Task $w={64}><IeIcon /></Task>
          <Task $w={55} $open><FirefoxIcon /></Task>
          <TaskEdge />
          <Task $w={62} $ml={2}><MediaIcon /></Task>
          <Task $w={62}><StopMark>13</StopMark></Task>
          <Task $w={60} $ml={1} $open><SkypeIcon /></Task>
          <Task $w={60} $ml={2} $open><OriginIcon /></Task>
          <Task $w={60} $ml={2} $open><ControlIcon /></Task>
          <Task $w={60} $ml={2} $open><BigGear /></Task>
          <Tray>
            <Lang>DE</Lang>
            <TrayIcon $w={17} $pt={10}><svg width="9" height="12"><path d="M.8 10.500 4.500 6.500l3.700 4z" fill="#fff" stroke="#4c6077" strokeWidth=".8" /></svg></TrayIcon>
            <TrayIcon $w={24}><svg width="17" height="16"><path d="M1.500 0v16" stroke="#3c4c5e" strokeWidth="3" /><path d="M3 2q4-1 6 1 3 1 7 0-1 6-6 6-3-2-7-1z" fill="#fff" stroke="#3c4c5e" strokeWidth=".8" /><path d="M1.500 1v14.500" stroke="#fff" strokeWidth="1.700" /></svg></TrayIcon>
            <TrayIcon $w={24}><svg width="17" height="16" fill="none"><path d="M5 3.500h10.500v8H5z" fill="#6b839c" stroke="#3a4654" strokeWidth="3" /><path d="M5 3.500h10.500v8H5zM8 14.500h6M10 12v2" stroke="#fff" strokeWidth="1.300" /><path d="M1 1v3h4V1M3 4v7" stroke="#fff" strokeWidth="1.400" /></svg></TrayIcon>
            <TrayIcon $w={20}><svg width="16" height="16" fill="none"><path d="M1 5.500h2.500L8 1.500v12l-4.500-4H1z" fill="#fff" stroke="#35475c" strokeWidth=".7" /><path d="M10 5q1.500 2.500 0 5M12.500 3q3 4.500 0 9" stroke="#fff" strokeWidth="1.200" /></svg></TrayIcon>
            <Clock>13:47<br />09.07.2013</Clock>
            <ShowDesktop />
          </Tray>
        </TaskBar>
        <PropertiesDialog />
      </Screen>
    </>
  );
}
